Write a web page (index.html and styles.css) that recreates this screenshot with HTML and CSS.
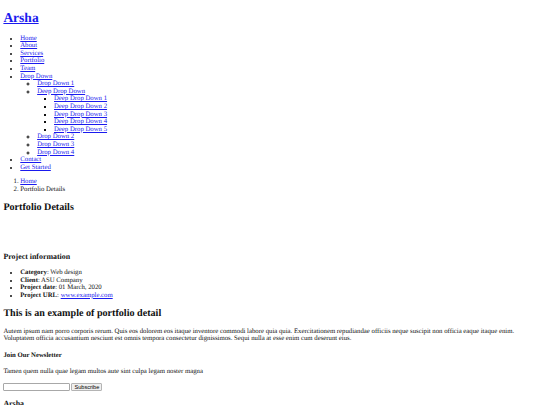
FILE: index.html
```html
<!DOCTYPE html>
<html lang="en">
<head>
<meta charset="utf-8">
<title>Portfolio Details - Arsha</title>
<link rel="stylesheet" href="styles.css">
</head>
<body class="page">
<header class="header">
  <h1 class="logo"><a class="link" href="#">Arsha</a></h1>
  <nav class="navbar">
    <ul class="list">
      <li><a class="link" href="#">Home</a></li>
      <li><a class="link" href="#">About</a></li>
      <li><a class="link" href="#">Services</a></li>
      <li><a class="link" href="#">Portfolio</a></li>
      <li><a class="link" href="#">Team</a></li>
      <li><a class="link" href="#">Drop Down</a>
        <ul class="sublist">
          <li><a class="link" href="#">Drop Down 1</a></li>
          <li><a class="link" href="#">Deep Drop Down</a>
            <ul class="sublist deep">
              <li><a class="link" href="#">Deep Drop Down 1</a></li>
              <li><a class="link" href="#">Deep Drop Down 2</a></li>
              <li><a class="link" href="#">Deep Drop Down 3</a></li>
              <li><a class="link" href="#">Deep Drop Down 4</a></li>
              <li><a class="link" href="#">Deep Drop Down 5</a></li>
            </ul>
          </li>
          <li><a class="link" href="#">Drop Down 2</a></li>
          <li><a class="link" href="#">Drop Down 3</a></li>
          <li><a class="link" href="#">Drop Down 4</a></li>
        </ul>
      </li>
      <li><a class="link" href="#">Contact</a></li>
      <li><a class="link" href="#">Get Started</a></li>
    </ul>
  </nav>
</header>
<main class="main">
  <section class="breadcrumbs">
    <ol class="list">
      <li><a class="link" href="#">Home</a></li>
      <li>Portfolio Details</li>
    </ol>
    <h2 class="h2">Portfolio Details</h2>
  </section>
  <section class="details">
    <div class="slider"></div>
    <h3 class="h3">Project information</h3>
    <ul class="list">
      <li><strong>Category</strong>: Web design</li>
      <li><strong>Client</strong>: ASU Company</li>
      <li><strong>Project date</strong>: 01 March, 2020</li>
      <li><strong>Project URL</strong>: <a class="link" href="#">www.example.com</a></li>
    </ul>
    <h2 class="h2">This is an example of portfolio detail</h2>
    <p class="para">Autem ipsum nam porro corporis rerum. Quis eos dolorem eos itaque inventore commodi labore quia quia. Exercitationem repudiandae officiis neque suscipit non officia eaque itaque enim. Voluptatem officia accusantium nesciunt est omnis tempora consectetur dignissimos. Sequi nulla at esse enim cum deserunt eius.</p>
  </section>
</main>
<footer class="footer">
  <h4 class="h4">Join Our Newsletter</h4>
  <p class="para">Tamen quem nulla quae legam multos aute sint culpa legam noster magna</p>
  <form class="form"><input class="field" type="email" name="email"><input class="submit" type="submit" value="Subscribe"></form>
  <h3 class="h3">Arsha</h3>
  <p class="para">A108 Adam Street<br>New York, NY 535022<br>United States</p>
</footer>
</body>
</html>
```
FILE: styles.css
```css
html {
  background: #ffffff;
}
.page {
  margin: 3.375px;
  font-family: "Liberation Serif", "Times New Roman", serif;
  font-size: 6.75px;
  line-height: 7.594px;
  color: #111111;
  text-rendering: geometricPrecision;
}
.link {
  color: #1a1aee;
  text-decoration: underline;
}
.logo {
  font-size: 13.5px;
  line-height: 14.3px;
  margin: 8px 0 9.045px;
  font-weight: bold;
}
.list {
  margin: 6.75px 0;
  padding-left: 16.875px;
}
.sublist {
  margin: 0;
  padding-left: 16.875px;
  list-style-type: circle;
}
.deep {
  list-style-type: square;
}
.h2 {
  font-size: 10.125px;
  line-height: 11.39px;
  margin: 8.404px 0;
  font-weight: bold;
}
.h3 {
  font-size: 7.9px;
  line-height: 9.28px;
  margin: 7.9px 0;
  font-weight: bold;
}
.h4 {
  font-size: 6.75px;
  line-height: 7.594px;
  margin: 8.98px 0;
  font-weight: bold;
}
.para {
  margin: 6.75px 0;
}
.slider {
  height: 22.4px;
}
.form {
  display: flex;
  align-items: center;
  margin: 0;
  height: 8.9px;
}
.field {
  box-sizing: border-box;
  width: 67px;
  height: 8.7px;
  margin: 0;
  padding: 0 1px;
  border: 1px solid #a8a8a8;
  border-radius: 1px;
  background: #ffffff;
  font-size: 5.6px;
}
.submit {
  box-sizing: border-box;
  width: 31px;
  height: 8.7px;
  margin: 0 0 0 1px;
  padding: 0;
  border: 1px solid #b4b4b4;
  border-radius: 1px;
  background: #efefef;
  color: #000000;
  font-family: "Liberation Sans", Arial, sans-serif;
  font-size: 5.6px;
  line-height: 6px;
}
```
